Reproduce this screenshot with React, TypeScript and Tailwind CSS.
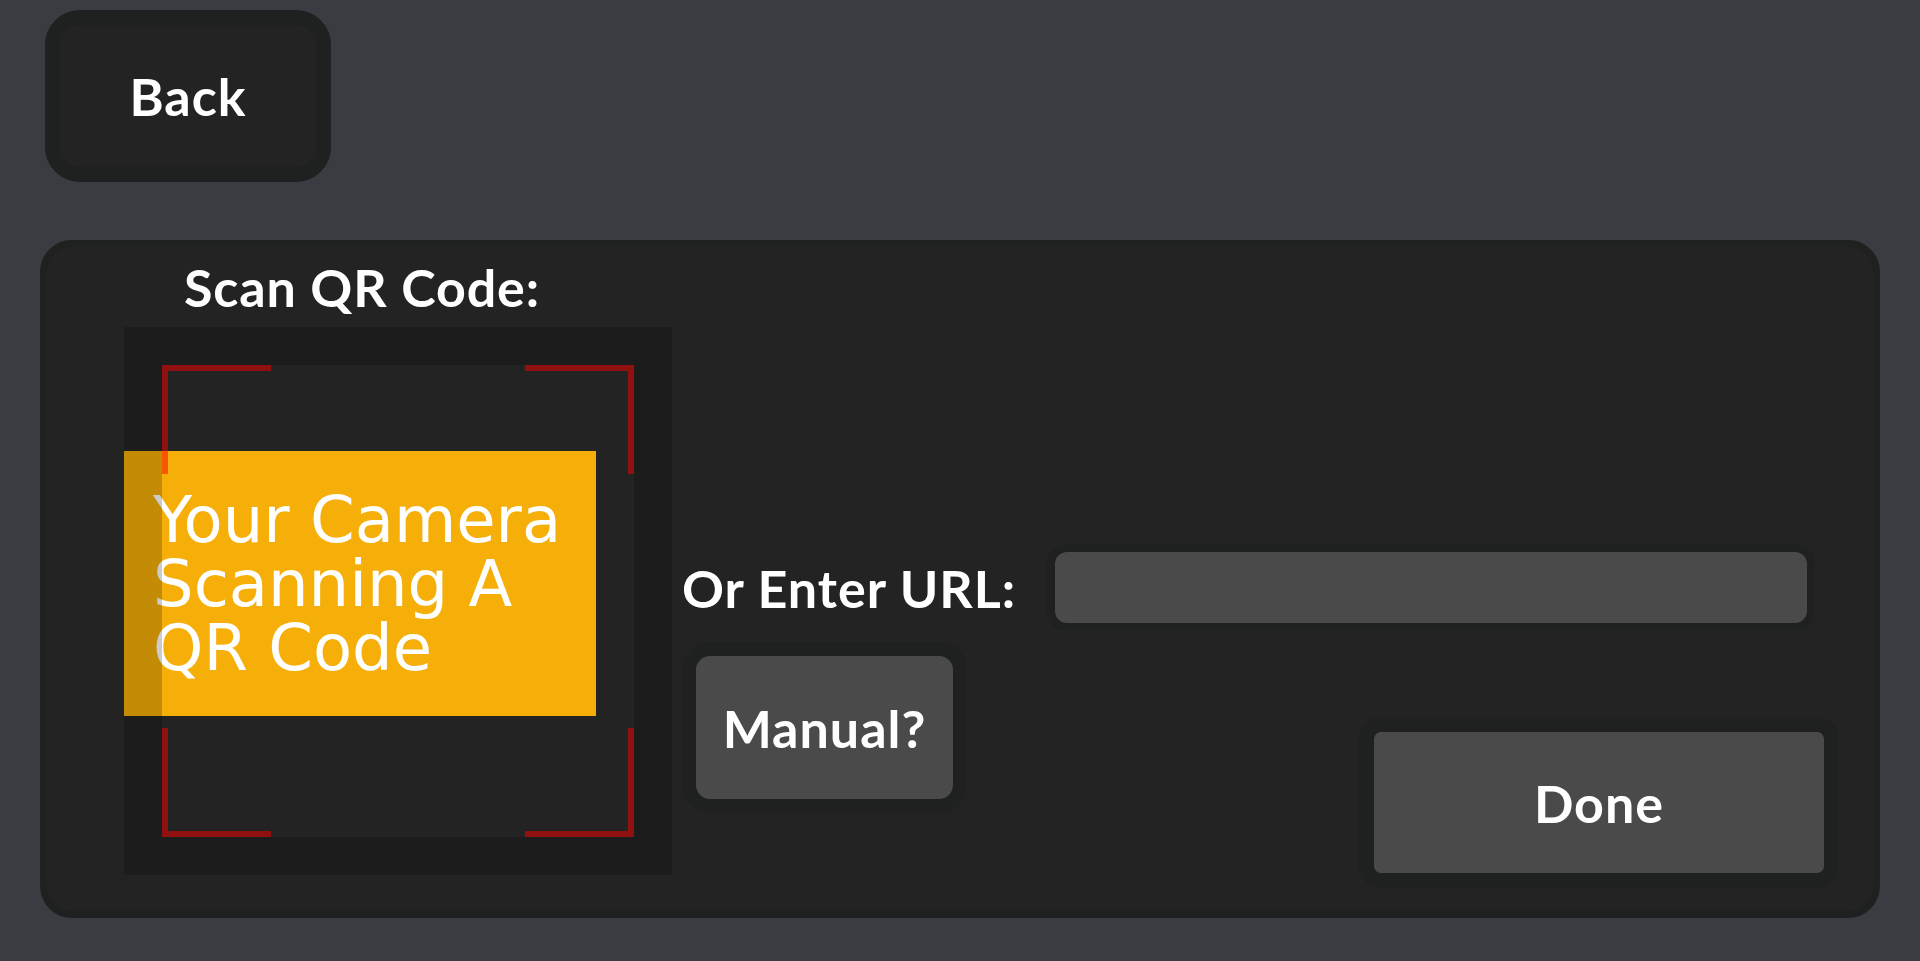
const ui = { fontFamily: "Lato, 'Noto Sans', sans-serif" };
const placeholder = { fontFamily: "'DejaVu Sans', sans-serif" };

function Corner({ pos }: { pos: string }) {
  return <div className={`absolute h-[109px] w-[109px] border-[rgba(255,0,0,0.5)] ${pos}`} />;
}

export default function App() {
  return (
    <main className="min-h-screen bg-[#3b3c41] pt-[10px] text-white" style={ui}>
      <button className="ml-[45px] flex h-[172px] w-[286px] items-center justify-center rounded-[35px] border-[15px] border-[#1f2020] bg-[#232323] text-[52px] font-bold leading-none tracking-[1px]">
        Back
      </button>

      <section className="mx-[40px] mt-[58px] flex rounded-[32px] border-[7px] border-[#1f2020] bg-[#232323]">
        {/* left: camera preview */}
        <div className="pb-[36px] pl-[77px] pt-[14px]">
          <h2 className="ml-[60px] text-[52px] font-bold leading-none tracking-[0.9px]">Scan QR Code:</h2>

          <div className="relative mt-[14px] h-[548px] w-[548px]">
            <div
              className="absolute left-0 top-[124px] h-[265px] w-[472px] bg-[#f5af08] pl-[29px] pt-[37px] text-[64px] leading-[64px] text-white"
              style={placeholder}
            >
              Your Camera
              <br />
              Scanning A
              <br />
              QR Code
            </div>
            <div className="absolute inset-0 border-[38px] border-black/20" />
            <div className="absolute inset-[38px]">
              <Corner pos="left-0 top-0 border-l-[6px] border-t-[6px]" />
              <Corner pos="right-0 top-0 border-r-[6px] border-t-[6px]" />
              <Corner pos="bottom-0 left-0 border-b-[6px] border-l-[6px]" />
              <Corner pos="bottom-0 right-0 border-b-[6px] border-r-[6px]" />
            </div>
          </div>
        </div>

        {/* right: manual entry */}
        <div className="flex flex-1 flex-col pb-[23px] pl-[10px] pt-[297px]">
          <div className="flex items-center">
            <span className="shrink-0 text-[52px] font-bold leading-none tracking-[1px]">Or Enter URL:</span>
            <div className="ml-auto mr-[58px] h-[87px] w-[768px] rounded-[20px] border-[8px] border-[#1f2020] bg-[#4a4a4a]" />
          </div>

          <div className="mt-[11px] flex items-start">
            <button className="flex h-[171px] w-[285px] items-center justify-center rounded-[28px] border-[14px] border-[#1f2020] bg-[#4a4a4a] text-[52px] font-bold leading-none tracking-[1px]">
              Manual?
            </button>
            <button className="ml-auto mr-[34px] mt-[75px] flex h-[171px] w-[480px] items-center justify-center rounded-[22px] border-[15px] border-[#1f2020] bg-[#4a4a4a] text-[52px] font-bold leading-none tracking-[1px]">
              Done
            </button>
          </div>
        </div>
      </section>
    </main>
  );
}
